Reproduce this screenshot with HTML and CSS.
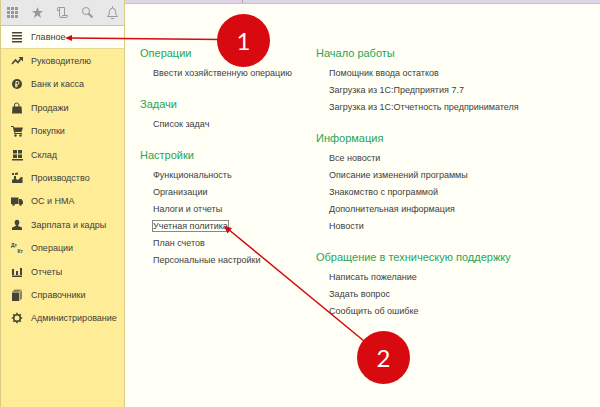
FILE: index.html
```
<!DOCTYPE html>
<html lang="ru">
<head>
  <meta charset="utf-8">
  <title>Главное</title>
  <link rel="stylesheet" href="styles.css">
</head>
<body>
  <div id="app">
    <div id="sidebar">
      <div id="toolbar">
        <button class="tool" aria-label="Меню">
          <svg width="13" height="13" viewBox="0 0 13 13" fill="#999"><path d="M1 1h3v3H1zM5 1h3v3H5zM9 1h3v3H9zM1 5h3v3H1zM5 5h3v3H5zM9 5h3v3H9zM1 9h3v3H1zM5 9h3v3H5zM9 9h3v3H9z"/></svg>
        </button>
        <button class="tool" aria-label="Избранное">
          <svg width="13" height="13" viewBox="0 0 13 13" fill="#999"><path d="M6.500 1l1.500 4h4L8.800 7.500 10 12 6.500 9.300 3 12l1.200-4.500L1 5h4z"/></svg>
        </button>
        <button class="tool" aria-label="История">
          <svg width="13" height="13" viewBox="0 0 13 13" fill="none" stroke="#999"><path d="M3.500 4.500h-2v-2q0-1 1-1h6v8.500M3.500 2v8q0 1.500 1.500 1.500h5.500q1 0 1-1.500v-.500H6.500v1"/></svg>
        </button>
        <button class="tool" aria-label="Поиск">
          <svg width="13" height="13" viewBox="0 0 13 13" fill="none" stroke="#999"><circle cx="5" cy="5" r="3.500"/><path d="M7.500 7.500l4 4" stroke-width="2"/></svg>
        </button>
        <button class="tool" aria-label="Уведомления">
          <svg width="13" height="13" viewBox="0 0 13 13" fill="none" stroke="#999"><path d="M1.500 10.500q2-1.500 2-5 0-3 3-3.500 3 .500 3 3.500 0 3.500 2 5zM6.500 0v2M5 12.500h3"/></svg>
        </button>
      </div>
      <nav id="sections">
        <a href="#" class="section active">
          <svg class="icon" viewBox="0 0 12 12"><path d="M1 1h10v1.500H1zM1 4h10v1.500H1zM1 7h10v1.500H1zM1 10h10v1.500H1z"/></svg>
          Главное
        </a>
        <a href="#" class="section">
          <svg class="icon" viewBox="0 0 12 12"><path d="M1 9l3.500-4 2.500 2.500 3-4" fill="none" stroke="#454535" stroke-width="1.600"/><path d="M7.500 2H12v4.500z"/></svg>
          Руководителю
        </a>
        <a href="#" class="section">
          <svg class="icon" viewBox="0 0 12 12"><circle cx="6" cy="6" r="5"/><path d="M5 9.500V3.500h1.500q1.500 0 1.500 1.500t-1.500 1.500H4M4 8h3" fill="none" stroke="#ffec96"/></svg>
          Банк и касса
        </a>
        <a href="#" class="section">
          <svg class="icon" viewBox="0 0 12 12"><path d="M1.500 4.500h9l.5 7H1z"/><path d="M3.500 6V3q0-2 2-2t2.500 2v3" fill="none" stroke="#454535"/></svg>
          Продажи
        </a>
        <a href="#" class="section">
          <svg class="icon" viewBox="0 0 12 12"><path d="M0 1h2.500l.5 1.500h9L10.500 7H4l.3 1H11v1H3.500L1.800 2H0z"/><circle cx="4.500" cy="10.500" r="1.200"/><circle cx="9.500" cy="10.500" r="1.200"/></svg>
          Покупки
        </a>
        <a href="#" class="section">
          <svg class="icon" viewBox="0 0 12 12"><path d="M2 1h4v3.500H2zM7 1h4v3.500H7zM2 5.500h4V9H2zM7 5.500h4V9H7zM1 10h11v1.500H1z"/></svg>
          Склад
        </a>
        <a href="#" class="section">
          <svg class="icon" viewBox="0 0 12 12"><path d="M1 11V8l2-1V4h2v3l2 1 3-3h1.500v6zM1 1h2v2H1zM4 1l3-.5v2L4 3z"/></svg>
          Производство
        </a>
        <a href="#" class="section">
          <svg class="icon" viewBox="0 0 12 12"><path d="M0 2.500h7.500v6.500H0zM8 4h2.500L12 6.500V9H8z"/><circle cx="2.500" cy="9.500" r="1.300"/><circle cx="9.500" cy="9.500" r="1.300"/></svg>
          ОС и НМА
        </a>
        <a href="#" class="section">
          <svg class="icon" viewBox="0 0 12 12"><ellipse cx="6" cy="3.500" rx="2.300" ry="2.800"/><path d="M4.800 5h2.400v2l3.800 1.500V11H1V8.500L4.800 7z"/></svg>
          Зарплата и кадры
        </a>
        <a href="#" class="section">
          <span class="icon dtkt"><b>Дт</b><b class="kt">Кт</b></span>
          Операции
        </a>
        <a href="#" class="section">
          <svg class="icon" viewBox="0 0 12 12"><path d="M1 3h2v6H1zM5 5h2v4H5zM9 2h2v7H9zM1 9.500h10V11H1z"/></svg>
          Отчеты
        </a>
        <a href="#" class="section">
          <svg class="icon" viewBox="0 0 12 12"><path d="M1 3.500h7V12H1z"/><path d="M1 3l2.500-2.500h7L8 3zM8.500 3.300L11 1v8.500L8.500 12z" fill="#8a8560"/></svg>
          Справочники
        </a>
        <a href="#" class="section">
          <svg class="icon" viewBox="0 0 12 12"><g fill="none" stroke="#454535" stroke-width="1.600"><circle cx="6" cy="6" r="3.300"/><path d="M6 .800v2M6 9.200v2M.800 6h2M9.200 6h2M2.300 2.300l1.400 1.400M8.300 8.300l1.400 1.400M2.300 9.700l1.400-1.400M8.300 3.700l1.400-1.400"/></g></svg>
          Администрирование
        </a>
      </nav>
    </div>
    <div id="main">
      <div id="tabs"><div class="tab"></div></div>
      <div id="content">
        <div class="column">
          <div class="group">
            <h2>Операции</h2>
            <ul>
              <li><a href="#">Ввести хозяйственную операцию</a></li>
            </ul>
          </div>
          <div class="group">
            <h2>Задачи</h2>
            <ul>
              <li><a href="#">Список задач</a></li>
            </ul>
          </div>
          <div class="group">
            <h2>Настройки</h2>
            <ul>
              <li><a href="#">Функциональность</a></li>
              <li><a href="#">Организации</a></li>
              <li><a href="#">Налоги и отчеты</a></li>
              <li><a href="#" class="selected">Учетная политика</a></li>
              <li><a href="#">План счетов</a></li>
              <li><a href="#">Персональные настройки</a></li>
            </ul>
          </div>
        </div>
        <div class="column">
          <div class="group">
            <h2>Начало работы</h2>
            <ul>
              <li><a href="#">Помощник ввода остатков</a></li>
              <li><a href="#">Загрузка из 1С:Предприятия 7.7</a></li>
              <li><a href="#">Загрузка из 1С:Отчетность предпринимателя</a></li>
            </ul>
          </div>
          <div class="group">
            <h2>Информация</h2>
            <ul>
              <li><a href="#">Все новости</a></li>
              <li><a href="#">Описание изменений программы</a></li>
              <li><a href="#">Знакомство с программой</a></li>
              <li><a href="#">Дополнительная информация</a></li>
              <li><a href="#">Новости</a></li>
            </ul>
          </div>
          <div class="group">
            <h2>Обращение в техническую поддержку</h2>
            <ul>
              <li><a href="#">Написать пожелание</a></li>
              <li><a href="#">Задать вопрос</a></li>
              <li><a href="#">Сообщить об ошибке</a></li>
            </ul>
          </div>
        </div>
      </div>
    </div>
    <!-- numbered callouts over the page -->
    <svg id="arrows" width="400" height="360" viewBox="0 0 400 360" fill="#d20a11" stroke="#d20a11">
      <path d="M70 38L220 39.500" stroke-width="1.500"/>
      <path d="M65 38l7-3v6z" stroke="none"/>
      <path d="M228 229L364 341" stroke-width="1.500"/>
      <path d="M224 226l8 2-4.500 5.500z" stroke="none"/>
    </svg>
    <div class="callout callout-1">1</div>
    <div class="callout callout-2">2</div>
  </div>
</body>
</html>
```

FILE: styles.css
```
html, body {
  height: 100%;
  margin: 0;
  background-color: #fffff5;
}
body {
  font-family: "Liberation Sans", Arial, sans-serif;
  font-size: 9px;
  color: #404040;
}
a {
  color: inherit;
  text-decoration: none;
}
#app {
  position: relative;
  display: flex;
  min-height: 100%;
}
#sidebar {
  box-sizing: border-box;
  width: 125px;
  flex-shrink: 0;
  background-color: #ffec96;
  border-left: 1px solid #d9ca85;
  border-right: 1px solid #d9ca85;
}
#toolbar {
  display: flex;
  justify-content: space-between;
  align-items: center;
  box-sizing: border-box;
  height: 26px;
  padding: 0 5px;
  background-color: #e8e8e8;
  border-bottom: 1px solid #d0c88c;
}
.tool {
  display: flex;
  padding: 0;
  border: 0;
  background: none;
}
#sections {
  display: grid;
  grid-auto-rows: 1fr;
  min-height: 304px;
}
.section {
  display: flex;
  align-items: center;
  gap: 8px;
  padding-left: 10px;
  white-space: nowrap;
}
.section.active {
  background-color: #fffff5;
  border-bottom: 1px solid #e5d98f;
}
.icon {
  width: 12px;
  height: 12px;
  flex-shrink: 0;
  fill: #454535;
}
.dtkt {
  display: flex;
  flex-direction: column;
  font-size: 5px;
  line-height: 6px;
}
.kt {
  text-align: right;
}
#main {
  flex: 1;
  min-width: 0;
}
#tabs {
  height: 3px;
  background-color: #ded6e6;
  border-bottom: 1px solid #cfc98a;
}
.tab {
  width: 117px;
  height: 3px;
  border-right: 1px solid #b0a8a8;
}
#content {
  display: grid;
  grid-template-columns: 176px 1fr;
  padding: 41px 15px;
}
.group {
  margin-bottom: 14px;
}
h2 {
  margin: 0 0 4px;
  font-size: 11px;
  line-height: 16px;
  font-weight: normal;
  color: #27a35a;
  white-space: nowrap;
}
ul {
  margin: 0;
  padding: 0 0 0 13px;
  list-style: none;
}
li {
  line-height: 17px;
  white-space: nowrap;
}
.selected {
  outline: 1px solid #888;
}
#arrows {
  position: absolute;
  top: 0;
  left: 0;
  pointer-events: none;
}
.callout {
  position: absolute;
  width: 53px;
  height: 53px;
  border-radius: 50%;
  background-color: #d80a0f;
  color: #fff;
  font-family: Lato, sans-serif;
  font-size: 24px;
  line-height: 53px;
  text-align: center;
}
.callout-1 {
  top: 14px;
  left: 217px;
}
.callout-2 {
  top: 331px;
  left: 357px;
}
```
